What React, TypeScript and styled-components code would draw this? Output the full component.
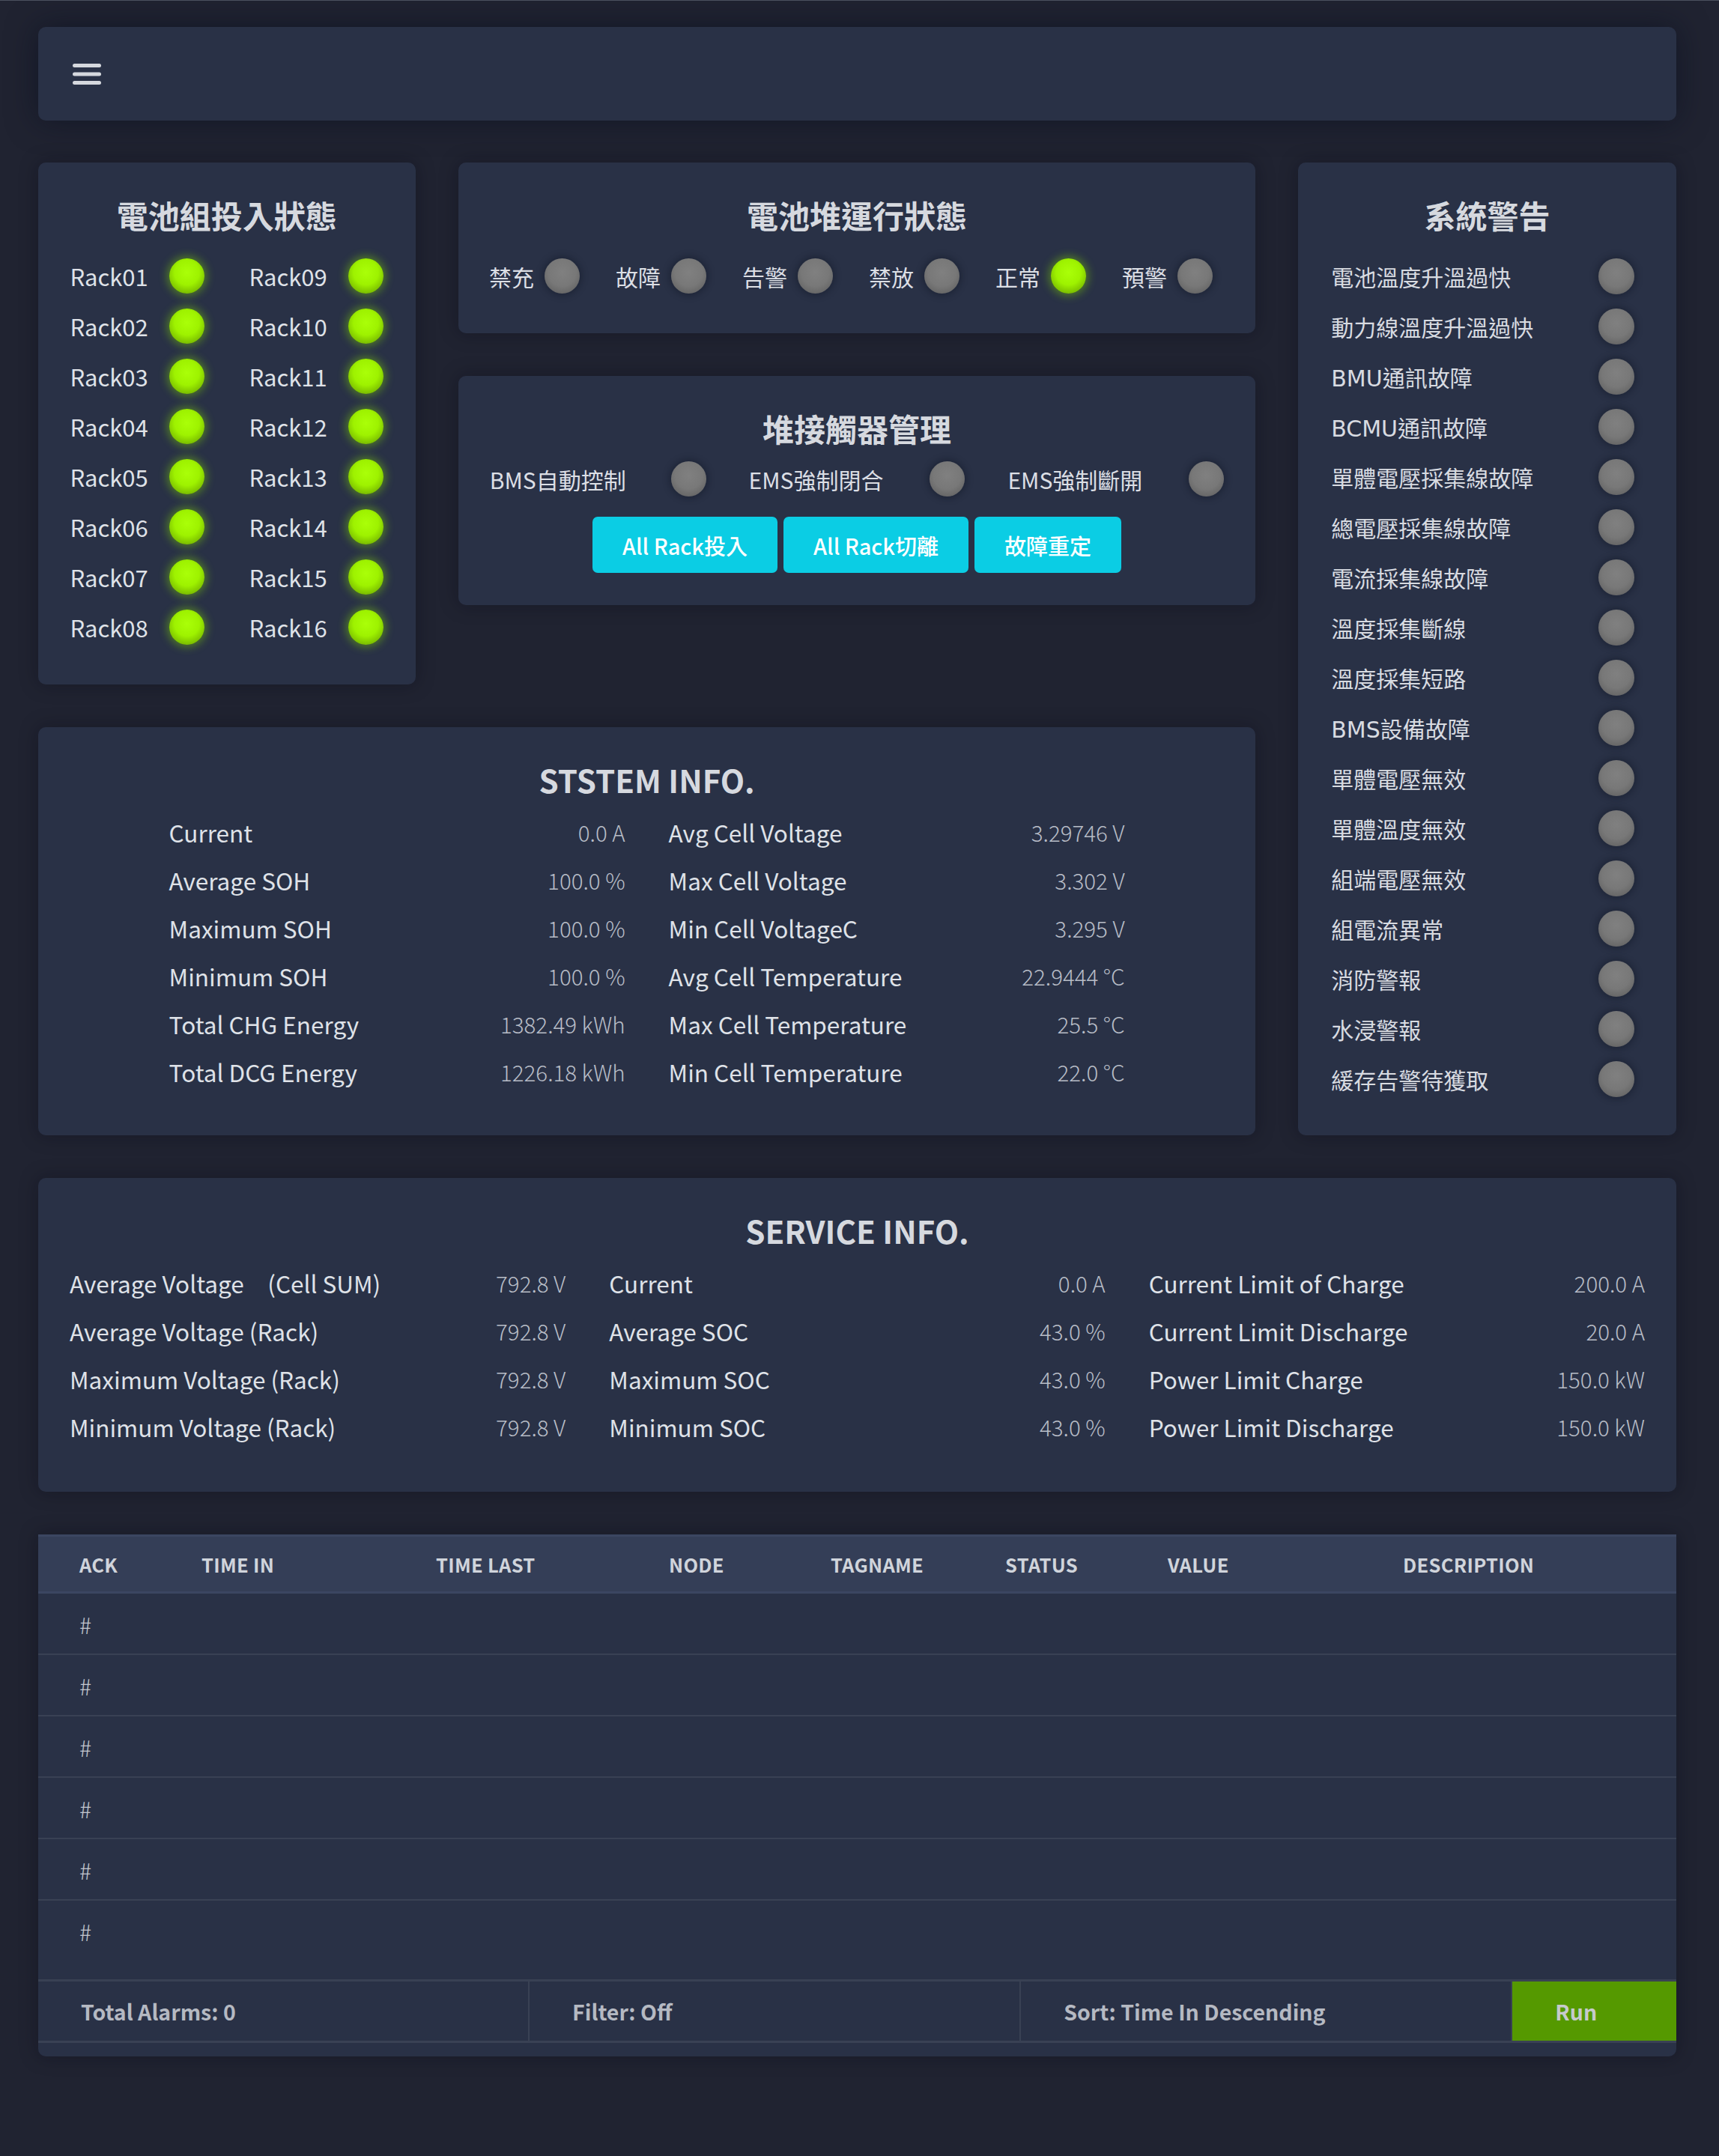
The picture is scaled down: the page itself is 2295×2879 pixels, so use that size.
import styled, { createGlobalStyle } from "styled-components";

const GlobalStyle = createGlobalStyle`
  html, body {
    margin: 0;
    padding: 0;
    background: #202331;
  }
  body {
    border-top: 1px solid #4b505e;
    min-height: 100vh;
    font-family: "Noto Sans CJK TC", "Noto Sans", sans-serif;
    color: #dcdfe5;
  }
  * {
    box-sizing: border-box;
  }
`;

const Page = styled.div`
  padding: 35px 57px 130px 51px;
`;

const Card = styled.div`
  background: #293146;
  border-radius: 10px;
  box-shadow: 0 0 24px rgba(8, 10, 20, 0.35);
`;

const TopBar = styled(Card)`
  height: 125px;
  display: flex;
  align-items: center;
  padding-left: 46px;
  box-shadow: 0 0 40px rgba(8, 12, 30, 0.55);
`;

const MenuButton = styled.button`
  background: none;
  border: none;
  padding: 0;
  display: flex;
  cursor: pointer;
`;

const Dashboard = styled.div`
  display: grid;
  grid-template-columns: 504fr 1065fr 505fr;
  grid-template-areas:
    "rack mid alerts"
    "sys sys alerts";
  gap: 57px;
  margin-top: 56px;
`;

const Panel = styled(Card)<{ $area?: string }>`
  grid-area: ${({ $area }) => $area || "auto"};
  padding: 40px 42px 43px;
`;

const Heading = styled.h2`
  margin: 0;
  text-align: center;
  font-size: 42px;
  line-height: 60px;
  font-weight: 700;
  color: #d6d9df;
`;

const Led = styled.span<{ $on?: boolean; $size?: number }>`
  width: ${({ $size }) => $size || 47}px;
  height: ${({ $size }) => $size || 47}px;
  border-radius: 50%;
  flex-shrink: 0;
  background: ${({ $on }) =>
    $on
      ? "radial-gradient(circle at 50% 40%, #aaff08 0%, #9ef200 45%, #74b400 82%, #5c9000 100%)"
      : "radial-gradient(circle at 50% 40%, #808080 0%, #787878 50%, #626262 85%, #515151 100%)"};
  box-shadow: ${({ $on }) =>
    $on
      ? "0 0 12px 3px rgba(128, 214, 0, 0.45)"
      : "0 0 10px 2px rgba(10, 14, 28, 0.4)"};
`;

/* rack panel */

const RackGrid = styled.div`
  display: grid;
  grid-template-columns: repeat(2, 180px);
  grid-auto-rows: 67px;
  column-gap: 59px;
  justify-content: center;
  margin-top: 18px;
`;

const RackItem = styled.div`
  display: flex;
  align-items: center;
`;

const RackLabel = styled.span`
  width: 133px;
  font-size: 31px;
  color: #dfe2e8;
`;

/* middle column */

const MidColumn = styled.div`
  grid-area: mid;
  display: flex;
  flex-direction: column;
  gap: 57px;
  align-self: start;
`;

const StatusRow = styled.div`
  display: flex;
  justify-content: center;
  align-items: center;
  gap: 48px;
  height: 67px;
  margin: 18px 0 0 -16px;
`;

const StatusItem = styled.div`
  display: flex;
  align-items: center;
  gap: 14px;
`;

const SmallLabel = styled.span`
  font-size: 30px;
  white-space: nowrap;
  color: #dcdfe5;
`;

const ContactorRow = styled.div`
  display: grid;
  grid-template-columns: repeat(3, 1fr);
  column-gap: 57px;
  height: 67px;
  margin-top: 4px;
`;

const ContactorItem = styled.div`
  display: flex;
  align-items: center;
  justify-content: space-between;
`;

const ButtonRow = styled.div`
  display: flex;
  justify-content: center;
  gap: 8px;
  margin-top: 17px;
`;

const ActionButton = styled.button`
  height: 75px;
  padding: 0 40px;
  border: none;
  border-radius: 7px;
  background: #0bcde4;
  color: #ffffff;
  font-family: "Noto Sans CJK TC", sans-serif;
  font-size: 29px;
  font-weight: 500;
  cursor: pointer;
`;

/* alerts */

const AlertPanel = styled(Panel)`
  padding: 40px 44px 42px;
`;

const AlertList = styled.div`
  margin-top: 18px;
  padding-right: 12px;
`;

const AlertRow = styled.div`
  height: 67px;
  display: flex;
  align-items: center;
  justify-content: space-between;
`;

const AlertLabel = styled.span`
  font-family: "DejaVu Sans", "Noto Sans CJK TC", sans-serif;
  font-size: 30px;
  color: #d8dbe1;
`;

/* info panels */

const InfoPanel = styled(Panel)<{ $bottom: number }>`
  padding-bottom: ${({ $bottom }) => $bottom}px;
`;

const ServicePanel = styled(InfoPanel)`
  margin-top: 57px;
`;

const InfoGrid = styled.div<{ $cols: number; $max?: number }>`
  display: grid;
  grid-template-columns: repeat(${({ $cols }) => $cols}, 1fr);
  column-gap: 58px;
  max-width: ${({ $max }) => ($max ? `${$max}px` : "none")};
  margin: 8px auto 0;
`;

const InfoColumn = styled.div`
  display: flex;
  flex-direction: column;
`;

const InfoRow = styled.div`
  height: 64px;
  display: flex;
  align-items: center;
  justify-content: space-between;
  white-space: pre;
`;

const InfoLabel = styled.span`
  font-size: 31.5px;
  color: #dfe2e8;
`;

const InfoValue = styled.span`
  font-size: 29.5px;
  font-weight: 300;
  color: #b8bdc7;
`;

/* alarm table */

const TableCard = styled.div`
  margin-top: 57px;
  background: #293146;
  border-radius: 0 0 10px 10px;
  padding-bottom: 18px;
  box-shadow: 0 0 24px rgba(8, 10, 20, 0.35);
`;

const COLS = "163px 313px 311px 216px 233px 217px 314px 1fr";

const HeaderRow = styled.div`
  display: grid;
  grid-template-columns: ${COLS};
  align-items: center;
  height: 79px;
  background: #343e57;
  border-top: 3px solid #3b4661;
  border-bottom: 3px solid #3b4661;
`;

const HeaderCell = styled.div`
  padding-left: 55px;
  font-size: 25.5px;
  font-weight: 700;
  letter-spacing: 0.3px;
  color: #d0d4db;
`;

const BodyRow = styled.div<{ $last?: boolean }>`
  display: grid;
  grid-template-columns: ${COLS};
  align-items: start;
  height: ${({ $last }) => ($last ? 105 : 82)}px;
  border-bottom: ${({ $last }) => ($last ? 0 : 2)}px solid #394154;
`;

const BodyCell = styled.div`
  height: 82px;
  display: flex;
  align-items: center;
  padding-left: 55px;
  font-size: 30px;
  font-weight: 300;
  color: #c3c7cf;
`;

const FooterRow = styled.div`
  display: grid;
  grid-template-columns: 3fr 3fr 3fr 1fr;
  height: 85px;
  border-top: 3px solid #394154;
  border-bottom: 3px solid #394154;
`;

const FooterCell = styled.div<{ $run?: boolean }>`
  display: flex;
  align-items: center;
  padding-left: 57px;
  font-size: 28.5px;
  font-weight: 700;
  color: ${({ $run }) => ($run ? "#c6cacc" : "#b5b9c2")};
  background: ${({ $run }) => ($run ? "#559900" : "transparent")};
  border-right: ${({ $run }) => ($run ? "none" : "2px solid #394154")};
  cursor: ${({ $run }) => ($run ? "pointer" : "default")};
`;

const racks = Array.from({ length: 16 }, (_, i) => `Rack${String(i + 1).padStart(2, "0")}`);
const rackOrder = Array.from({ length: 8 }, (_, r) => [racks[r], racks[r + 8]]).flat();

const stackStates = [
  { label: "禁充", on: false },
  { label: "故障", on: false },
  { label: "告警", on: false },
  { label: "禁放", on: false },
  { label: "正常", on: true },
  { label: "預警", on: false },
];

const contactors = ["BMS自動控制", "EMS強制閉合", "EMS強制斷開"];

const alerts = [
  "電池溫度升溫過快",
  "動力線溫度升溫過快",
  "BMU通訊故障",
  "BCMU通訊故障",
  "單體電壓採集線故障",
  "總電壓採集線故障",
  "電流採集線故障",
  "溫度採集斷線",
  "溫度採集短路",
  "BMS設備故障",
  "單體電壓無效",
  "單體溫度無效",
  "組端電壓無效",
  "組電流異常",
  "消防警報",
  "水浸警報",
  "緩存告警待獲取",
];

type Item = [string, string];

const systemInfo: Item[][] = [
  [
    ["Current", "0.0 A"],
    ["Average SOH", "100.0 %"],
    ["Maximum SOH", "100.0 %"],
    ["Minimum SOH", "100.0 %"],
    ["Total CHG Energy", "1382.49 kWh"],
    ["Total DCG Energy", "1226.18 kWh"],
  ],
  [
    ["Avg Cell Voltage", "3.29746 V"],
    ["Max Cell Voltage", "3.302 V"],
    ["Min Cell VoltageC", "3.295 V"],
    ["Avg Cell Temperature", "22.9444 °C"],
    ["Max Cell Temperature", "25.5 °C"],
    ["Min Cell Temperature", "22.0 °C"],
  ],
];

const serviceInfo: Item[][] = [
  [
    ["Average Voltage\u3000(Cell SUM)", "792.8 V"],
    ["Average Voltage (Rack)", "792.8 V"],
    ["Maximum Voltage (Rack)", "792.8 V"],
    ["Minimum Voltage (Rack)", "792.8 V"],
  ],
  [
    ["Current", "0.0 A"],
    ["Average SOC", "43.0 %"],
    ["Maximum SOC", "43.0 %"],
    ["Minimum SOC", "43.0 %"],
  ],
  [
    ["Current Limit of Charge", "200.0 A"],
    ["Current Limit Discharge", "20.0 A"],
    ["Power Limit Charge", "150.0 kW"],
    ["Power Limit Discharge", "150.0 kW"],
  ],
];

const tableHeaders = ["ACK", "TIME IN", "TIME LAST", "NODE", "TAGNAME", "STATUS", "VALUE", "DESCRIPTION"];

function HamburgerIcon() {
  return (
    <svg width="38" height="28" viewBox="0 0 38 28" fill="#d5d8de">
      <rect x="0" y="0" width="38" height="5" rx="2.5" />
      <rect x="0" y="11.5" width="38" height="5" rx="2.5" />
      <rect x="0" y="23" width="38" height="5" rx="2.5" />
    </svg>
  );
}

function InfoColumns({ data }: { data: Item[][] }) {
  return (
    <>
      {data.map((col, ci) => (
        <InfoColumn key={ci}>
          {col.map(([label, value]) => (
            <InfoRow key={label}>
              <InfoLabel>{label}</InfoLabel>
              <InfoValue>{value}</InfoValue>
            </InfoRow>
          ))}
        </InfoColumn>
      ))}
    </>
  );
}

export default function App() {
  return (
    <>
      <GlobalStyle />
      <Page>
        <TopBar>
          <MenuButton aria-label="menu">
            <HamburgerIcon />
          </MenuButton>
        </TopBar>

        <Dashboard>
          <Panel $area="rack">
            <Heading>電池組投入狀態</Heading>
            <RackGrid>
              {rackOrder.map((name) => (
                <RackItem key={name}>
                  <RackLabel>{name}</RackLabel>
                  <Led $on />
                </RackItem>
              ))}
            </RackGrid>
          </Panel>

          <MidColumn>
            <Panel>
              <Heading>電池堆運行狀態</Heading>
              <StatusRow>
                {stackStates.map((s) => (
                  <StatusItem key={s.label}>
                    <SmallLabel>{s.label}</SmallLabel>
                    <Led $on={s.on} />
                  </StatusItem>
                ))}
              </StatusRow>
            </Panel>

            <Panel>
              <Heading>堆接觸器管理</Heading>
              <ContactorRow>
                {contactors.map((c) => (
                  <ContactorItem key={c}>
                    <SmallLabel>{c}</SmallLabel>
                    <Led />
                  </ContactorItem>
                ))}
              </ContactorRow>
              <ButtonRow>
                <ActionButton>All Rack投入</ActionButton>
                <ActionButton>All Rack切離</ActionButton>
                <ActionButton>故障重定</ActionButton>
              </ButtonRow>
            </Panel>
          </MidColumn>

          <AlertPanel $area="alerts">
            <Heading>系統警告</Heading>
            <AlertList>
              {alerts.map((a) => (
                <AlertRow key={a}>
                  <AlertLabel>{a}</AlertLabel>
                  <Led $size={48} />
                </AlertRow>
              ))}
            </AlertList>
          </AlertPanel>

          <InfoPanel $area="sys" $bottom={53}>
            <Heading>STSTEM INFO.</Heading>
            <InfoGrid $cols={2} $max={1276}>
              <InfoColumns data={systemInfo} />
            </InfoGrid>
          </InfoPanel>
        </Dashboard>

        <ServicePanel $bottom={55}>
          <Heading>SERVICE INFO.</Heading>
          <InfoGrid $cols={3}>
            <InfoColumns data={serviceInfo} />
          </InfoGrid>
        </ServicePanel>

        <TableCard>
          <HeaderRow>
            {tableHeaders.map((h) => (
              <HeaderCell key={h}>{h}</HeaderCell>
            ))}
          </HeaderRow>
          {Array.from({ length: 6 }, (_, i) => (
            <BodyRow key={i} $last={i === 5}>
              <BodyCell>#</BodyCell>
            </BodyRow>
          ))}
          <FooterRow>
            <FooterCell>Total Alarms: 0</FooterCell>
            <FooterCell>Filter: Off</FooterCell>
            <FooterCell>Sort: Time In Descending</FooterCell>
            <FooterCell $run>Run</FooterCell>
          </FooterRow>
        </TableCard>
      </Page>
    </>
  );
}
